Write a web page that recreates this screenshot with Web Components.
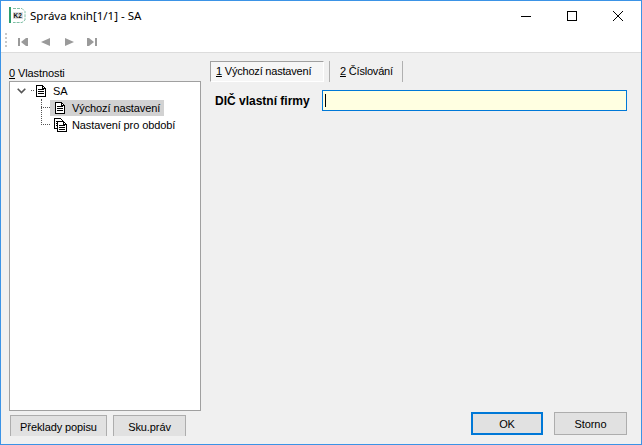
<!DOCTYPE html>
<html lang="cs">
<head>
<meta charset="utf-8">
<title>Správa knih</title>
<style>
  html, body { margin: 0; padding: 0; }
  body { width: 642px; height: 445px; overflow: hidden; font: 11px "Liberation Sans", sans-serif; letter-spacing: -0.1px; color: #000; }
</style>
</head>
<body>
<k-window>
  <k-titlebar slot="title" caption="Správa knih[1/1] - SA"></k-titlebar>
  <k-toolbar slot="toolbar"></k-toolbar>
  <k-tree-panel slot="left" label="Vlastnosti" key="0"></k-tree-panel>
  <k-tabs slot="right"></k-tabs>
  <k-field slot="right" label="DIČ vlastní firmy"></k-field>
  <k-button slot="left-buttons" w="97">Překlady popisu</k-button>
  <k-button slot="left-buttons" w="73">Sku.práv</k-button>
  <k-button slot="buttons" w="72" primary>OK</k-button>
  <k-button slot="buttons" w="73">Storno</k-button>
</k-window>

<script>
const DOC = `<svg width="10" height="12" viewBox="0 0 10 12" shape-rendering="crispEdges" fill="none" stroke="#000" style="display:block">
  <path d="M.5 .5H6.5L9.5 3.5V11.5H.5Z" fill="#fff"/>
  <path d="M6.5 .5V3.5H9.5M2 4.5H8M2 6.5H8M2 8.5H8"/>
</svg>`;
const DOCS = `<svg width="13" height="14" viewBox="0 0 13 14" shape-rendering="crispEdges" fill="none" stroke="#000" style="display:block">
  <path d="M.5 .5H6.5L8.5 2.5V10.5H.5Z" fill="#fff"/>
  <path d="M2 3.5H5M2 5.5H3M2 7.5H3"/>
  <path d="M3.5 3.5H9.5L12.5 6.5V13.5H3.5Z" fill="#fff"/>
  <path d="M9.5 3.5V6.5H12.5M5 7.5H11M5 9.5H11M5 11.5H11"/>
</svg>`;

class KWindow extends HTMLElement {
  constructor() {
    super();
    this.attachShadow({ mode: 'open' });
    this.shadowRoot.innerHTML = `
      <style>
        :host {
          display: flex; flex-direction: column; box-sizing: border-box;
          width: 642px; height: 445px; border: 1px solid #3b93e6;
          background: #f0f0f0; overflow: hidden;
        }
        .head { background: #fff; border-bottom: 1px solid #dcdcdc; height: 51px; flex: none; }
        .body { flex: 1; display: grid; grid-template-columns: 192px 1fr; column-gap: 8px; padding: 13px 14px 0 8px; min-height: 0; align-items: start; }
        .left { display: flex; flex-direction: column; height: 370px; }
        .foot-left { display: flex; gap: 6px; padding: 4px 0 0 1px; height: 21px; overflow: hidden; flex: none; align-items: flex-start; }
        .col { display: flex; flex-direction: column; justify-content: space-between; height: 369px; }
        .foot-right { display: flex; gap: 11px; justify-content: flex-end; height: 23px; }
      </style>
      <div class="head"><slot name="title"></slot><slot name="toolbar"></slot></div>
      <div class="body">
        <div class="left"><slot name="left"></slot><div class="foot-left"><slot name="left-buttons"></slot></div></div>
        <div class="col">
          <div><slot name="right"></slot></div>
          <div class="foot-right"><slot name="buttons"></slot></div>
        </div>
      </div>`;
  }
}

class KTitlebar extends HTMLElement {
  constructor() {
    super();
    this.attachShadow({ mode: 'open' });
    this.shadowRoot.innerHTML = `
      <style>
        :host { display: flex; align-items: center; height: 29px; font: 11.5px "Noto Sans", sans-serif; letter-spacing: 0; }
        svg { flex: none; display: block; }
        .logo { margin: 0 4px 0 8px; }
        .cap { flex: 1; }
        .ctl { display: flex; }
        .ctl div { width: 46px; height: 29px; display: flex; align-items: center; justify-content: center; }
      </style>
      <svg class="logo" width="17" height="17" viewBox="0 0 17 17">
        <rect x="0" y="0" width="2" height="16" fill="#2f9e6e"/>
        <path d="M4 1.5H13L16 4.5V13L13 15.5H4" fill="#fff" stroke="#7fbfa6" stroke-dasharray="3 1"/>
        <rect x="4" y="5" width="10" height="7" fill="#dedede"/>
        <text x="4.5" y="11" font-family="Liberation Sans" font-weight="bold" font-size="6.5" fill="#111">K2</text>
      </svg>
      <span class="cap"></span>
      <div class="ctl">
        <div><svg width="10" height="10" viewBox="0 0 10 10" shape-rendering="crispEdges"><path d="M0 5.5H10" stroke="#000"/></svg></div>
        <div><svg width="10" height="10" viewBox="0 0 10 10" shape-rendering="crispEdges"><rect x=".5" y=".5" width="9" height="9" fill="none" stroke="#000"/></svg></div>
        <div><svg width="10" height="10" viewBox="0 0 10 10"><path d="M0 0L10 10M10 0L0 10" stroke="#000" fill="none"/></svg></div>
      </div>`;
    this.shadowRoot.querySelector('.cap').textContent = this.getAttribute('caption');
  }
}

class KToolbar extends HTMLElement {
  constructor() {
    super();
    this.attachShadow({ mode: 'open' });
    this.shadowRoot.innerHTML = `
      <style>
        :host { display: flex; align-items: center; height: 22px; padding-left: 4px; }
        .grip { width: 2px; height: 16px; margin-right: 11px;
          background: repeating-linear-gradient(#c8c8c8 0 2px, transparent 2px 4px); }
        .btns { display: flex; gap: 13px; margin-top: 2px; }
        svg { display: block; }
      </style>
      <div class="grip"></div>
      <div class="btns">
        <svg width="10" height="8" viewBox="0 0 10 8" fill="#9a9a9a"><path d="M0 0H2V8H0ZM10 0V8H8L3 4L8 0Z"/></svg>
        <svg width="9" height="8" viewBox="0 0 9 8" fill="#9a9a9a"><path d="M0 4L9 0V8Z"/></svg>
        <svg width="9" height="8" viewBox="0 0 9 8" fill="#9a9a9a" style="margin-left:2px"><path d="M9 4L0 0V8Z"/></svg>
        <svg width="10" height="8" viewBox="0 0 10 8" fill="#9a9a9a"><path d="M10 0H8V8H10ZM0 0V8H2L7 4L2 0Z"/></svg>
      </div>`;
  }
}

class KTreePanel extends HTMLElement {
  constructor() {
    super();
    this.attachShadow({ mode: 'open' });
    this.shadowRoot.innerHTML = `
      <style>
        :host { display: flex; flex-direction: column; flex: 1; min-height: 0; }
        .lbl { height: 15px; line-height: 14px; }
        .box { flex: 1; box-sizing: border-box; background: #fff; border: 1px solid #a0a0a0; }
        .tree { position: relative; }
        .row { display: flex; align-items: center; height: 17px; }
        .chev { margin-left: 7px; flex: none; }
        .dots-h { border-top: 1px dotted #555; width: 3px; margin: 0 2px 0 5px; }
        .root .lead { margin-right: 7px; }
        .kid { margin-left: 31px; }
        .kid i { display: block; width: 9px; border-top: 1px dotted #555; }
        .ico { width: 22px; flex: none; display: flex; box-sizing: border-box; }
        .sel { background: #d2d2d2; padding-right: 4px; height: 16px; display: flex; align-items: center; }
        .sel .ico { padding-left: 5px; }
        .multi { padding-left: 4px; }
        .vline { position: absolute; left: 31px; top: 17px; height: 26px; border-left: 1px dotted #555; }
      </style>
      <div class="lbl"><u>${this.getAttribute('key')}</u> ${this.getAttribute('label')}</div>
      <div class="box">
        <div class="tree">
          <div class="vline"></div>
          <div class="row root">
            <svg class="chev" width="9" height="6" viewBox="0 0 9 6"><path d="M.7 .7L4.5 4.5L8.3 .7" fill="none" stroke="#555" stroke-width="1.6"/></svg>
            <span class="dots-h"></span><span class="lead">${DOC}</span><span>SA</span>
          </div>
          <div class="row kid"><i></i><span class="sel"><span class="ico">${DOC}</span>Výchozí nastavení</span></div>
          <div class="row kid"><i></i><span class="ico multi">${DOCS}</span><span>Nastavení pro období</span></div>
        </div>
      </div>`;
  }
}

class KTabs extends HTMLElement {
  constructor() {
    super();
    this.attachShadow({ mode: 'open' });
    this.shadowRoot.innerHTML = `
      <style>
        :host { display: flex; height: 21px; align-items: flex-start; margin: -5px 0 0 1px; letter-spacing: -0.2px; }
        .tab { box-sizing: border-box; height: 21px; }
        .on { width: 114px; border: 1px solid; border-color: #a0a0a0 #fff #fff #a0a0a0; background: #f6f6f6; padding-left: 5px; line-height: 19px; }
        .off { margin-left: 5px; width: 74px; border-left: 1px solid #b0b0b0; border-right: 1px solid #b0b0b0; padding-left: 10px; line-height: 20px; }
      </style>
      <div class="tab on"><u>1</u> Výchozí nastavení</div>
      <div class="tab off"><u>2</u> Číslování</div>`;
  }
}

class KField extends HTMLElement {
  constructor() {
    super();
    this.attachShadow({ mode: 'open' });
    this.shadowRoot.innerHTML = `
      <style>
        :host { display: flex; align-items: center; margin: 8px 0 0 6px; height: 21px; letter-spacing: 0; }
        label { width: 107px; font-weight: bold; font-size: 12px; flex: none; }
        .inp { flex: none; width: 305px; height: 21px; box-sizing: border-box; border: 1px solid #0078d7; background: #ffffe1; padding: 3px 2px; }
        .caret { width: 1px; height: 13px; background: #000; }
      </style>
      <label>${this.getAttribute('label')}</label>
      <div class="inp"><div class="caret"></div></div>`;
  }
}

class KButton extends HTMLElement {
  constructor() {
    super();
    this.attachShadow({ mode: 'open' });
    const w = this.getAttribute('w');
    const primary = this.hasAttribute('primary');
    this.shadowRoot.innerHTML = `
      <style>
        :host { display: block; flex: none; }
        button {
          display: block; box-sizing: border-box; width: ${w}px; height: 23px; padding: 0; margin: 0;
          background: #e1e1e1; font: inherit; letter-spacing: inherit; color: #000;
          border: ${primary ? '2px solid #0078d7' : '1px solid #adadad'};
        }
      </style>
      <button><slot></slot></button>`;
  }
}

customElements.define('k-window', KWindow);
customElements.define('k-titlebar', KTitlebar);
customElements.define('k-toolbar', KToolbar);
customElements.define('k-tree-panel', KTreePanel);
customElements.define('k-tabs', KTabs);
customElements.define('k-field', KField);
customElements.define('k-button', KButton);
</script>
</body>
</html>
